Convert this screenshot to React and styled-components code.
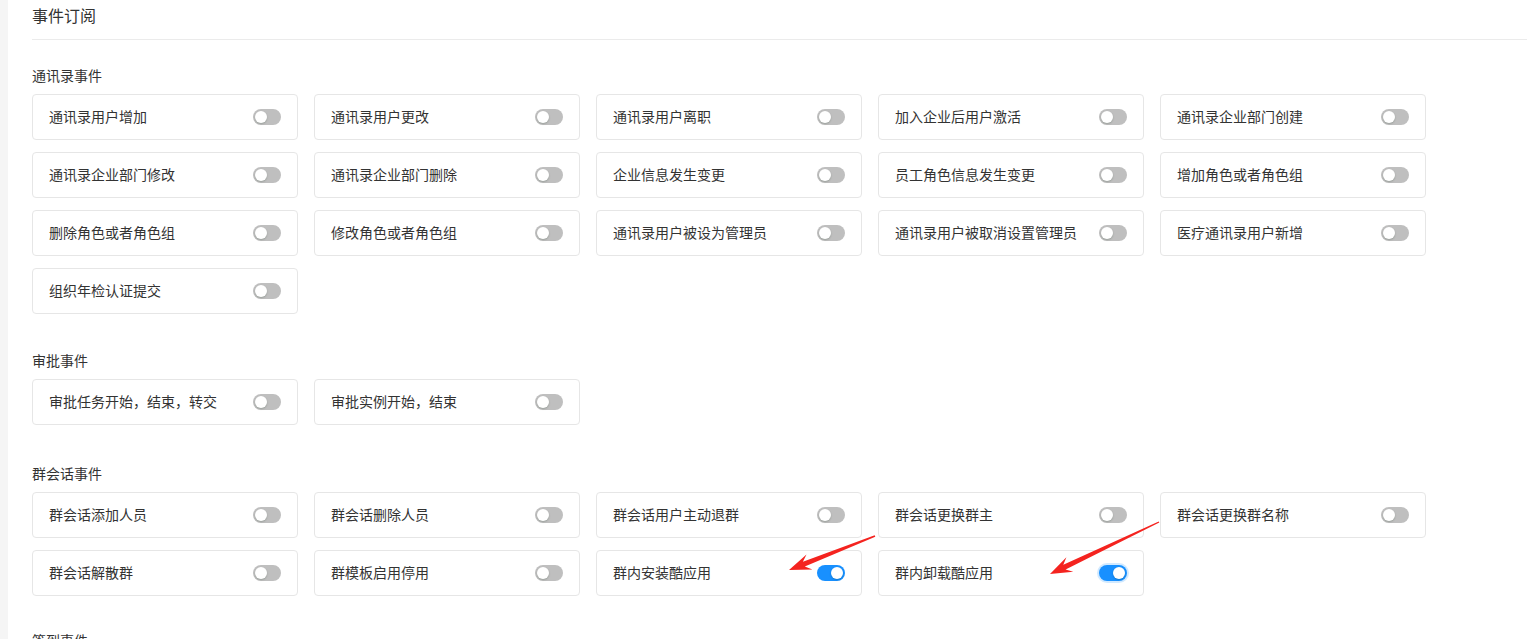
import React from 'react';
import styled, { createGlobalStyle } from 'styled-components';

const GlobalStyle = createGlobalStyle`
  html, body {
    margin: 0;
    padding: 0;
    background: #f5f5f5;
    font-family: "Noto Sans CJK SC", "Noto Sans", "Liberation Sans", sans-serif;
    color: #333;
  }
`;

const Page = styled.div`
  position: relative;
  padding-left: 8px;
  min-height: 639px;
  overflow: hidden;
`;

const Panel = styled.div`
  background: #fff;
  padding: 0 0 40px 24px;
  min-height: 700px;
`;

const Header = styled.div`
  padding: 3px 0 12px;
  font-size: 16px;
  line-height: 24px;
  color: #333;
  border-bottom: 1px solid #ebebeb;
`;

const Section = styled.div`
  margin-top: ${(p) => p.$top}px;
`;

const SectionTitle = styled.div`
  font-size: 14px;
  line-height: 20px;
  color: #333;
  margin-bottom: 9px;
`;

const Grid = styled.div`
  display: grid;
  grid-template-columns: repeat(5, 266px);
  gap: 12px 16px;
`;

const Card = styled.div`
  box-sizing: border-box;
  height: 46px;
  display: flex;
  align-items: center;
  justify-content: space-between;
  padding: 0 16px 2px;
  border: 1px solid #e6e6e6;
  border-radius: 4px;
  background: #fff;
  font-size: 14px;
  color: #333;
`;

const Switch = styled.span`
  position: relative;
  display: inline-block;
  width: 28px;
  height: 16px;
  margin-top: 1px;
  border-radius: 8px;
  background: ${(p) => (p.$on ? '#1890ff' : '#bfbfbf')};
  box-shadow: ${(p) => (p.$focus ? '0 0 0 2px rgba(24,144,255,0.2)' : 'none')};
  flex-shrink: 0;

  &::after {
    content: '';
    position: absolute;
    top: 2px;
    left: ${(p) => (p.$on ? '14px' : '2px')};
    width: 12px;
    height: 12px;
    border-radius: 50%;
    background: #fff;
    box-shadow: 0 1px 2px rgba(0, 35, 11, 0.2);
  }
`;

const Overlay = styled.svg`
  position: absolute;
  left: 0;
  top: 0;
  pointer-events: none;
`;

const sections = [
  {
    title: '通讯录事件',
    top: 25,
    items: [
      '通讯录用户增加', '通讯录用户更改', '通讯录用户离职', '加入企业后用户激活', '通讯录企业部门创建',
      '通讯录企业部门修改', '通讯录企业部门删除', '企业信息发生变更', '员工角色信息发生变更', '增加角色或者角色组',
      '删除角色或者角色组', '修改角色或者角色组', '通讯录用户被设为管理员', '通讯录用户被取消设置管理员', '医疗通讯录用户新增',
      '组织年检认证提交',
    ],
  },
  {
    title: '审批事件',
    top: 36,
    items: ['审批任务开始，结束，转交', '审批实例开始，结束'],
  },
  {
    title: '群会话事件',
    top: 38,
    items: [
      '群会话添加人员', '群会话删除人员', '群会话用户主动退群', '群会话更换群主', '群会话更换群名称',
      '群会话解散群', '群模板启用停用', ['群内安装酷应用', 'on'], ['群内卸载酷应用', 'focus'],
    ],
  },
  { title: '签到事件', top: 34, items: [] },
];

function arrowPoints(x1, y1, x2, y2) {
  const dx = x2 - x1;
  const dy = y2 - y1;
  const len = Math.hypot(dx, dy);
  const ux = dx / len;
  const uy = dy / len;
  const nx = -uy;
  const ny = ux;
  const L = 22;
  const W = 8;
  const s = 2.6;
  const t = 0.7;
  const p = (bx, by, a, b) => [bx + ux * a + nx * b, by + uy * a + ny * b];
  const pts = [
    [x2, y2],
    p(x2, y2, -L, W),
    p(x2, y2, -L + 6, s),
    p(x1, y1, 0, t),
    p(x1, y1, 0, -t),
    p(x2, y2, -L + 6, -s),
    p(x2, y2, -L, -W),
  ];
  return pts.map((q) => q.map((v) => v.toFixed(1)).join(',')).join(' ');
}

export default function App() {
  return (
    <>
      <GlobalStyle />
      <Page>
        <Panel>
          <Header>事件订阅</Header>
          {sections.map((sec) => (
            <Section key={sec.title} $top={sec.top}>
              <SectionTitle>{sec.title}</SectionTitle>
              {sec.items.length > 0 && (
                <Grid>
                  {sec.items.map((it) => {
                    const [label, state] = Array.isArray(it) ? it : [it, null];
                    return (
                      <Card key={label}>
                        <span>{label}</span>
                        <Switch $on={!!state} $focus={state === 'focus'} />
                      </Card>
                    );
                  })}
                </Grid>
              )}
            </Section>
          ))}
        </Panel>
        <Overlay width="1527" height="639" viewBox="0 0 1527 639">
          <polygon points={arrowPoints(875, 536, 789, 570)} fill="#f4231f" />
          <polygon points={arrowPoints(1159, 522, 1050, 574)} fill="#f4231f" />
        </Overlay>
      </Page>
    </>
  );
}
